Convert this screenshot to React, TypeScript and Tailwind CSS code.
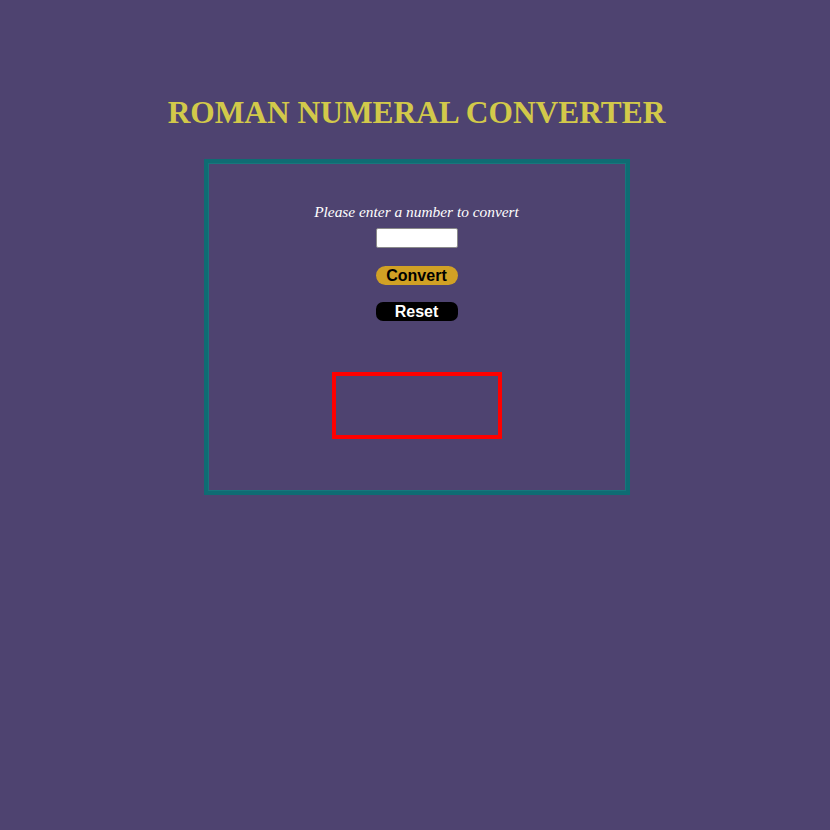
import { useState } from "react"

const toRoman = (n: number) => {
  const table: [number, string][] = [
    [1000, "M"], [900, "CM"], [500, "D"], [400, "CD"], [100, "C"], [90, "XC"],
    [50, "L"], [40, "XL"], [10, "X"], [9, "IX"], [5, "V"], [4, "IV"], [1, "I"],
  ]
  let out = ""
  for (const [v, s] of table) {
    while (n >= v) {
      out += s
      n -= v
    }
  }
  return out
}

export default function App() {
  const [value, setValue] = useState("")
  const [result, setResult] = useState("")

  return (
    <div className="min-h-[830px] w-full bg-[#4e4370] pt-[94px] font-['Liberation_Serif',serif]">
      <div className="flex flex-col items-center pl-[3px]">
        <h1 className="text-[31.4px] leading-[37px] font-bold text-[#d2c94a]">
          ROMAN NUMERAL CONVERTER
        </h1>

        {/* converter panel */}
        <div className="mt-[28px] flex h-[336px] w-[426px] flex-col items-center border-4 border-[#0f6c73] pt-[40px] shadow-[inset_0_0_0_1px_#17767c]">
          <p className="text-[15.4px] leading-[18px] italic text-white">
            Please enter a number to convert
          </p>
          <input
            value={value}
            onChange={(e) => setValue(e.target.value)}
            className="mt-[7px] h-[20px] w-[82px] rounded-[2px] border border-[#8a8a8a] bg-white px-1 text-[13px] outline-none"
          />
          <button
            onClick={() => setResult(toRoman(parseInt(value) || 0))}
            className="mt-[18px] h-[19px] w-[82px] rounded-full bg-[#d1a125] font-['Liberation_Sans',sans-serif] text-[16px] leading-[19px] font-bold text-black"
          >
            Convert
          </button>
          <button
            onClick={() => {
              setValue("")
              setResult("")
            }}
            className="mt-[17px] h-[19px] w-[82px] rounded-[7px] bg-black font-['Liberation_Sans',sans-serif] text-[16px] leading-[19px] font-bold text-white"
          >
            Reset
          </button>
          <div className="mt-[51px] flex h-[67px] w-[170px] items-center justify-center border-4 border-[#ff0000] text-2xl font-bold text-white">
            {result}
          </div>
        </div>
      </div>
    </div>
  )
}
